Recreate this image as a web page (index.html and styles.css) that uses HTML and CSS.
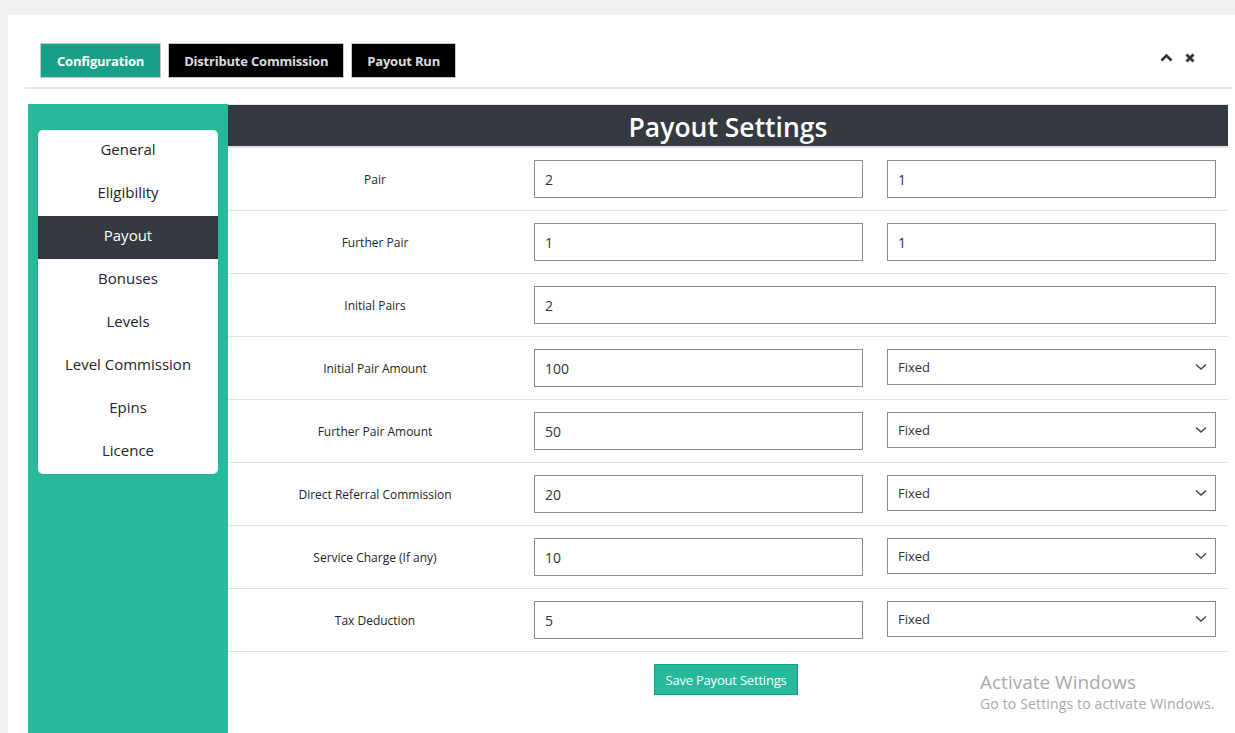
FILE: index.html
```html
<!DOCTYPE html>
<html lang="en">
<head>
<meta charset="utf-8">
<title>Payout Settings</title>
<link rel="stylesheet" href="styles.css">
</head>
<body>
<div class="topstrip"></div>
<div class="panel">
  <div class="panel-head">
    <div class="tabs">
      <button class="tab active">Configuration</button>
      <button class="tab">Distribute Commission</button>
      <button class="tab">Payout Run</button>
    </div>
    <div class="tools">
      <svg class="ico" width="13" height="9" viewBox="0 0 13 9"><path d="M1.5 7.5 L6.5 2.5 L11.5 7.5" fill="none" stroke="#333" stroke-width="2.6"/></svg>
      <svg class="ico" width="10" height="10" viewBox="0 0 10 10"><path d="M1.5 1.5 L8.5 8.5 M8.5 1.5 L1.5 8.5" fill="none" stroke="#333" stroke-width="2.8"/></svg>
    </div>
  </div>
  <div class="divider"></div>
  <div class="content">
    <aside class="sidebar">
      <ul class="menu">
        <li>General</li>
        <li>Eligibility</li>
        <li class="current">Payout</li>
        <li>Bonuses</li>
        <li>Levels</li>
        <li>Level Commission</li>
        <li>Epins</li>
        <li>Licence</li>
      </ul>
    </aside>
    <main class="main">
      <h1 class="title">Payout Settings</h1>
      <div class="row">
        <div class="label">Pair</div>
        <input class="field" value="2">
        <input class="field" value="1">
      </div>
      <div class="row">
        <div class="label">Further Pair</div>
        <input class="field" value="1">
        <input class="field" value="1">
      </div>
      <div class="row">
        <div class="label">Initial Pairs</div>
        <input class="field wide" value="2">
      </div>
      <div class="row">
        <div class="label">Initial Pair Amount</div>
        <input class="field" value="100">
        <div class="select">Fixed<svg width="12" height="8" viewBox="0 0 12 8"><path d="M1 1.5 L6 6 L11 1.5" fill="none" stroke="#444" stroke-width="1.5"/></svg></div>
      </div>
      <div class="row">
        <div class="label">Further Pair Amount</div>
        <input class="field" value="50">
        <div class="select">Fixed<svg width="12" height="8" viewBox="0 0 12 8"><path d="M1 1.5 L6 6 L11 1.5" fill="none" stroke="#444" stroke-width="1.5"/></svg></div>
      </div>
      <div class="row">
        <div class="label">Direct Referral Commission</div>
        <input class="field" value="20">
        <div class="select">Fixed<svg width="12" height="8" viewBox="0 0 12 8"><path d="M1 1.5 L6 6 L11 1.5" fill="none" stroke="#444" stroke-width="1.5"/></svg></div>
      </div>
      <div class="row">
        <div class="label">Service Charge (If any)</div>
        <input class="field" value="10">
        <div class="select">Fixed<svg width="12" height="8" viewBox="0 0 12 8"><path d="M1 1.5 L6 6 L11 1.5" fill="none" stroke="#444" stroke-width="1.5"/></svg></div>
      </div>
      <div class="row">
        <div class="label">Tax Deduction</div>
        <input class="field" value="5">
        <div class="select">Fixed<svg width="12" height="8" viewBox="0 0 12 8"><path d="M1 1.5 L6 6 L11 1.5" fill="none" stroke="#444" stroke-width="1.5"/></svg></div>
      </div>
      <div class="actions">
        <button class="save">Save Payout Settings</button>
      </div>
    </main>
  </div>
</div>
<div class="watermark">
  <div class="wm-title">Activate Windows</div>
  <div class="wm-sub">Go to Settings to activate Windows.</div>
</div>
</body>
</html>
```
FILE: styles.css
```css
html, body {
  margin: 0;
  padding: 0;
  overflow: hidden;
  height: 733px;
}
body {
  background: #f0f0f0;
  font-family: "Open Sans", "Noto Sans", sans-serif;
  color: #212529;
}
.topstrip {
  height: 15px;
}
.panel {
  margin-left: 8px;
  background: #fff;
  height: 718px;
}
.panel-head {
  display: flex;
  justify-content: space-between;
  align-items: center;
  padding: 28px 40px 0 32px;
}
.tabs {
  display: flex;
  gap: 7px;
}
.tab {
  font-family: inherit;
  font-weight: 700;
  font-size: 13px;
  letter-spacing: -0.2px;
  height: 35px;
  padding: 0 15px;
  border: 1px solid #c8c8c8;
  background: #000;
  color: #dcdcdc;
  cursor: pointer;
}
.tab.active {
  background: #189f87;
  color: #fff;
  padding: 0 16px;
}
.tools {
  display: flex;
  align-items: center;
  gap: 12px;
  margin-top: -6px;
}
.divider {
  margin: 9px 3px 0 17px;
  height: 2px;
  background: #e3e6ea;
}
.content {
  display: flex;
  margin: 15px 7px 0 20px;
}
.sidebar {
  width: 200px;
  flex: none;
  background: #26b99a;
  padding: 26px 10px 0;
  box-sizing: border-box;
  height: 640px;
}
.menu {
  list-style: none;
  margin: 0;
  padding: 0;
  background: #fff;
  border-radius: 5px;
  overflow: hidden;
}
.menu li {
  height: 43px;
  line-height: 38px;
  text-align: center;
  font-size: 15px;
  color: #212529;
}
.menu li.current {
  background: #343a40;
  color: #fff;
}
.main {
  flex: 1;
}
.title {
  margin: 0;
  height: 41px;
  line-height: 44px;
  border-top: 1px solid #e3e6ea;
  border-bottom: 2px solid #dee2e6;
  background: #343a40;
  color: #fff;
  text-align: center;
  font-size: 26.5px;
  font-weight: 600;
  letter-spacing: 0;
}
.row {
  display: grid;
  grid-template-columns: 282px minmax(0, 1fr) minmax(0, 1fr);
  column-gap: 24px;
  align-items: start;
  padding: 12px 12px 0 0;
  box-sizing: border-box;
  border-bottom: 1px solid #dee2e6;
  height: 63px;
}
.label {
  text-align: center;
  font-size: 12px;
  color: #212529;
  line-height: 40px;
  height: 38px;
  padding-left: 12px;
}
.field {
  box-sizing: border-box;
  height: 38px;
  border: 1px solid #8c8c8c;
  padding: 0 10px;
  font-family: inherit;
  font-size: 14px;
  color: #333;
  width: 100%;
  margin: 0;
  outline: none;
}
.field.wide {
  grid-column: 2 / 4;
}
.select {
  box-sizing: border-box;
  height: 36px;
  border: 1px solid #8c8c8c;
  padding: 0 8px 0 10px;
  display: flex;
  align-items: center;
  justify-content: space-between;
  font-size: 13px;
  color: #333;
}
.actions {
  display: flex;
  justify-content: center;
  padding-top: 12px;
  padding-right: 4px;
}
.save {
  font-family: inherit;
  font-size: 13px;
  letter-spacing: -0.2px;
  height: 31px;
  padding: 0 10px;
  background: #26b99a;
  border: 1px solid #169f85;
  color: #fff;
  cursor: pointer;
}
.watermark {
  position: absolute;
  left: 980px;
  top: 670px;
  color: #a9a9a9;
  font-family: "Open Sans", "Noto Sans", sans-serif;
}
.wm-title {
  font-size: 19px;
  line-height: 24px;
}
.wm-sub {
  font-size: 14px;
  line-height: 20px;
  letter-spacing: 0.15px;
}
```
